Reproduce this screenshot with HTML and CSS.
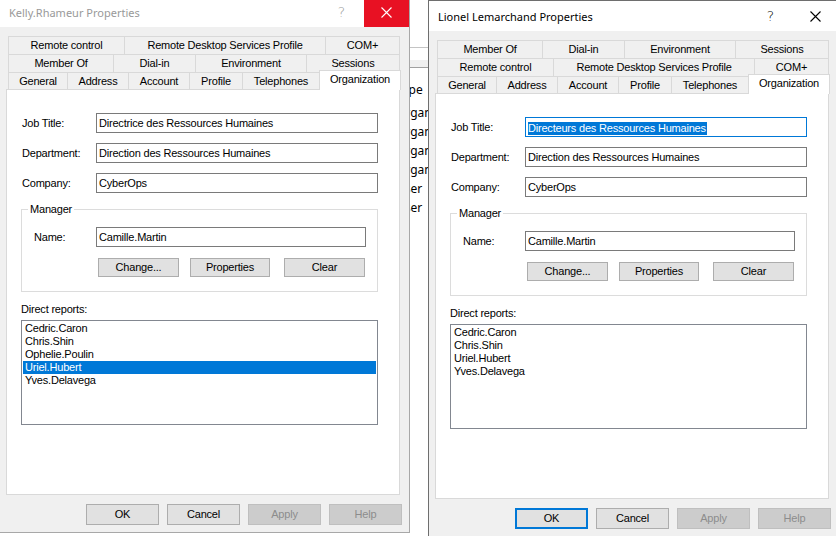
FILE: index.html
```html
<!DOCTYPE html>
<html>
<head>
<meta charset="utf-8">
<link rel="stylesheet" href="styles.css">
</head>
<body>
<div class="desktop">
  <div class="bgwin">
    <div class="bg-toolbar"></div>
    <div class="bg-space"></div>
    <div class="bg-header"></div>
    <ul class="bg-list">
      <li class="first">Type</li>
      <li>Organ</li>
      <li>Organ</li>
      <li>Organ</li>
      <li>Organ</li>
      <li>User</li>
      <li>User</li>
    </ul>
  </div>

  <div class="window win-left inactive">
    <div class="titlebar">
      <span class="title">Kelly.Rhameur Properties</span>
      <span class="tb-btn tb-help">?</span>
      <span class="tb-btn tb-close hover"><svg width="11" height="11" viewBox="0 0 11 11"><path d="M0.5 0.5 L10.5 10.5 M10.5 0.5 L0.5 10.5" stroke="#fff" stroke-width="1.1" fill="none"/></svg></span>
    </div>
    <div class="tabs">
      <div class="tabrow">
        <div class="tab w-remote">Remote control</div>
        <div class="tab w-rds">Remote Desktop Services Profile</div>
        <div class="tab w-com">COM+</div>
      </div>
      <div class="tabrow">
        <div class="tab w-member">Member Of</div>
        <div class="tab w-dial">Dial-in</div>
        <div class="tab w-env">Environment</div>
        <div class="tab w-sess">Sessions</div>
      </div>
      <div class="tabrow last">
        <div class="tab w-gen">General</div>
        <div class="tab w-addr">Address</div>
        <div class="tab w-acct">Account</div>
        <div class="tab w-prof">Profile</div>
        <div class="tab w-tel">Telephones</div>
        <div class="tab w-org selected">Organization</div>
      </div>
    </div>
    <div class="panel">
      <div class="field"><span class="lbl">Job Title:</span><div class="input">Directrice des Ressources Humaines</div></div>
      <div class="field"><span class="lbl">Department:</span><div class="input">Direction des Ressources Humaines</div></div>
      <div class="field"><span class="lbl">Company:</span><div class="input">CyberOps</div></div>
      <fieldset class="group">
        <legend>Manager</legend>
        <div class="name-row"><span class="name-lbl">Name:</span><div class="input name-input">Camille.Martin</div></div>
        <div class="mgr-buttons">
          <div class="btn btn-change">Change...</div>
          <div class="btn btn-props">Properties</div>
          <div class="btn btn-clear">Clear</div>
        </div>
      </fieldset>
      <div class="dr-label">Direct reports:</div>
      <div class="list">
        <div class="item">Cedric.Caron</div>
        <div class="item">Chris.Shin</div>
        <div class="item">Ophelie.Poulin</div>
        <div class="item sel">Uriel.Hubert</div>
        <div class="item">Yves.Delavega</div>
      </div>
    </div>
    <div class="buttons">
      <div class="dbtn">OK</div>
      <div class="dbtn">Cancel</div>
      <div class="dbtn disabled">Apply</div>
      <div class="dbtn disabled">Help</div>
    </div>
  </div>

  <div class="window win-right">
    <div class="titlebar">
      <span class="title">Lionel Lemarchand Properties</span>
      <span class="tb-btn tb-help">?</span>
      <span class="tb-btn tb-close"><svg width="11" height="11" viewBox="0 0 11 11"><path d="M0.5 0.5 L10.5 10.5 M10.5 0.5 L0.5 10.5" stroke="#000" stroke-width="1.1" fill="none"/></svg></span>
    </div>
    <div class="tabs">
      <div class="tabrow">
        <div class="tab w-member">Member Of</div>
        <div class="tab w-dial">Dial-in</div>
        <div class="tab w-env">Environment</div>
        <div class="tab w-sess">Sessions</div>
      </div>
      <div class="tabrow">
        <div class="tab w-remote">Remote control</div>
        <div class="tab w-rds">Remote Desktop Services Profile</div>
        <div class="tab w-com">COM+</div>
      </div>
      <div class="tabrow last">
        <div class="tab w-gen">General</div>
        <div class="tab w-addr">Address</div>
        <div class="tab w-acct">Account</div>
        <div class="tab w-prof">Profile</div>
        <div class="tab w-tel">Telephones</div>
        <div class="tab w-org selected">Organization</div>
      </div>
    </div>
    <div class="panel">
      <div class="field"><span class="lbl">Job Title:</span><div class="input focused"><span class="seltext">Directeurs des Ressources Humaines</span></div></div>
      <div class="field"><span class="lbl">Department:</span><div class="input">Direction des Ressources Humaines</div></div>
      <div class="field"><span class="lbl">Company:</span><div class="input">CyberOps</div></div>
      <fieldset class="group">
        <legend>Manager</legend>
        <div class="name-row"><span class="name-lbl">Name:</span><div class="input name-input">Camille.Martin</div></div>
        <div class="mgr-buttons">
          <div class="btn btn-change">Change...</div>
          <div class="btn btn-props">Properties</div>
          <div class="btn btn-clear">Clear</div>
        </div>
      </fieldset>
      <div class="dr-label">Direct reports:</div>
      <div class="list">
        <div class="item">Cedric.Caron</div>
        <div class="item">Chris.Shin</div>
        <div class="item">Uriel.Hubert</div>
        <div class="item">Yves.Delavega</div>
      </div>
    </div>
    <div class="buttons">
      <div class="dbtn default">OK</div>
      <div class="dbtn">Cancel</div>
      <div class="dbtn disabled">Apply</div>
      <div class="dbtn disabled">Help</div>
    </div>
  </div>
</div>
</body>
</html>
```
FILE: styles.css
```css
html, body {
  margin: 0;
  padding: 0;
}
body {
  width: 836px;
  height: 536px;
  overflow: hidden;
  background: #ffffff;
  font-family: "Liberation Sans", Arial, sans-serif;
  font-size: 11px;
  letter-spacing: -0.2px;
  color: #000;
}
.desktop {
  position: relative;
  width: 836px;
  height: 536px;
  overflow: hidden;
}

/* background window peeking between dialogs */
.bgwin {
  position: absolute;
  left: 380px;
  top: 0;
  width: 48px;
  height: 536px;
  overflow: hidden;
  background: #fff;
  font-family: "Noto Sans", "Open Sans", sans-serif;
  font-size: 12px;
  letter-spacing: 0;
}
.bg-toolbar {
  height: 47px;
  border-bottom: 1px solid #c4c4c4;
}
.bg-space {
  height: 12px;
}
.bg-header {
  height: 7px;
  background: #f0f0f0;
  border-bottom: 1px solid #a0a0a0;
}
.bg-list {
  list-style: none;
  margin: 0;
  padding: 12px 0 0 16px;
  white-space: nowrap;
}
.bg-list li {
  line-height: 19px;
}
.bg-list li.first {
  margin-bottom: 4px;
}

/* dialog window */
.window {
  position: absolute;
  top: 0;
  width: 411px;
  height: 537px;
  box-sizing: border-box;
  border: 1px solid #6e6e6e;
  background: #f0f0f0;
  display: flex;
  flex-direction: column;
}
.win-left {
  left: -1px;
  top: -4px;
  border-color: #a8a8a8;
}
.win-right {
  left: 428px;
  top: 0;
}

.titlebar {
  flex: none;
  height: 30px;
  background: #fff;
  display: flex;
  align-items: center;
  font-family: "Noto Sans", "Open Sans", sans-serif;
  font-size: 11px;
  letter-spacing: 0;
  color: #000;
}
.title {
  flex: 1;
  padding-left: 9px;
  white-space: nowrap;
}
.tb-btn {
  width: 45px;
  height: 30px;
  display: flex;
  align-items: center;
  justify-content: center;
}
.tb-help {
  font-size: 14px;
  font-family: "DejaVu Sans", sans-serif;
  font-weight: 300;
}
.tb-close.hover {
  background: #e81123;
}
.inactive .title,
.inactive .tb-help {
  color: #999999;
}

/* tabs */
.tabs {
  flex: none;
  margin: 9px 0 0 8px;
}
.tabrow {
  display: flex;
  height: 18px;
}
.tabrow.last {
  height: 17px;
}
.tab {
  box-sizing: border-box;
  height: 18px;
  border: 1px solid #d9d9d9;
  border-bottom: none;
  margin-left: -1px;
  text-align: center;
  line-height: 17px;
  background: #f0f0f0;
  white-space: nowrap;
}
.tab:first-child {
  margin-left: 0;
}
.tabrow.last .tab {
  height: 17px;
  line-height: 16px;
}
.tabrow.last .tab.selected {
  position: relative;
  z-index: 1;
  background: #fff;
  height: 20px;
  margin-top: -2px;
  line-height: 17px;
}
.w-member { width: 106px; }
.w-dial { width: 83px; }
.w-env { width: 112px; }
.w-sess { width: 94px; }
.w-remote { width: 117px; }
.w-rds { width: 202px; }
.w-com { width: 75px; }
.w-gen { width: 60px; }
.w-addr { width: 62px; }
.w-acct { width: 62px; }
.w-prof { width: 54px; }
.w-tel { width: 78px; }
.w-org { width: 82px; }

/* panel */
.panel {
  flex: none;
  margin-left: 6px;
  width: 394px;
  height: 406px;
  box-sizing: border-box;
  border: 1px solid #d9d9d9;
  background: #fff;
  padding: 23px 0 0 14px;
}
.field {
  display: flex;
  align-items: center;
  height: 20px;
  margin-bottom: 10px;
}
.lbl {
  width: 75px;
  padding-left: 1px;
  box-sizing: border-box;
  white-space: nowrap;
}
.input {
  width: 282px;
  height: 20px;
  box-sizing: border-box;
  border: 1px solid #7a7a7a;
  padding: 0 2px;
  line-height: 18px;
  white-space: nowrap;
  overflow: hidden;
  background: #fff;
}
.input.focused {
  border-color: #0078d7;
}
.seltext {
  background: #0078d7;
  color: #fff;
  display: inline-block;
  line-height: 13px;
  vertical-align: middle;
  padding-right: 1px;
}
.group {
  margin: 1px 0 0 0;
  width: 357px;
  box-sizing: border-box;
  border: 1px solid #dcdcdc;
  padding: 0 0 14px 0;
  min-width: 0;
}
.group legend {
  margin-left: 6px;
  padding: 0 2px;
  line-height: 13px;
}
.name-row {
  display: flex;
  align-items: center;
  height: 20px;
  margin-top: 11px;
  padding-left: 12px;
}
.name-lbl {
  width: 62px;
}
.name-input {
  width: 270px;
}
.mgr-buttons {
  display: flex;
  margin-top: 11px;
  padding-left: 76px;
}
.btn {
  height: 19px;
  box-sizing: border-box;
  border: 1px solid #adadad;
  background: #e1e1e1;
  text-align: center;
  line-height: 17px;
  white-space: nowrap;
}
.btn-change { width: 81px; }
.btn-props { width: 80px; margin-left: 11px; }
.btn-clear { width: 81px; margin-left: 14px; }

.dr-label {
  margin-top: 11px;
  line-height: 13px;
}
.list {
  margin-top: 4px;
  width: 357px;
  height: 105px;
  box-sizing: border-box;
  border: 1px solid #828790;
  padding: 1px;
}
.item {
  line-height: 13px;
  padding-left: 2px;
  white-space: nowrap;
}
.item.sel {
  background: #0078d7;
  color: #fff;
}

/* dialog buttons */
.buttons {
  flex: none;
  display: flex;
  justify-content: flex-end;
  gap: 8px;
  margin-top: 9px;
  padding-right: 7px;
}
.dbtn {
  width: 73px;
  height: 21px;
  box-sizing: border-box;
  border: 1px solid #adadad;
  background: #e1e1e1;
  text-align: center;
  line-height: 19px;
}
.dbtn.default {
  border: 2px solid #0078d7;
  line-height: 17px;
}
.dbtn.disabled {
  background: #cccccc;
  border-color: #bfbfbf;
  color: #8c8c8c;
}
```
